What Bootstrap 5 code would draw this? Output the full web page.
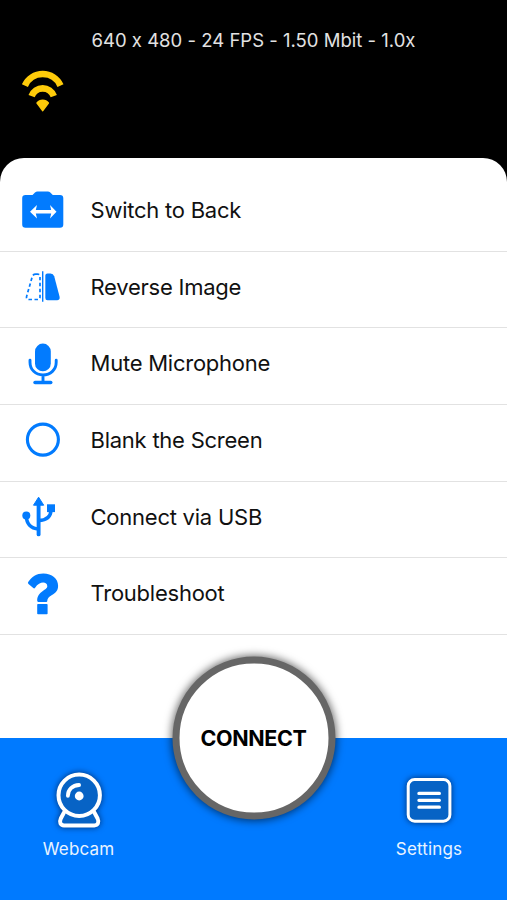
<!DOCTYPE html>
<html lang="en">
<head>
<meta charset="utf-8">
<meta name="viewport" content="width=device-width, initial-scale=1">
<title>Webcam</title>
<link href="https://cdn.jsdelivr.net/npm/bootstrap@5.3.0/dist/css/bootstrap.min.css" rel="stylesheet">
<style>
body { font-family: Inter, "Liberation Sans", sans-serif; color: #111; }
.app-screen { height: 900px; overflow: hidden; }
.status-area { height: 158px; }
.stream-info { padding-top: 27px; font-size: 18.5px; line-height: 26px; letter-spacing: .01px; font-feature-settings: "calt" 0; color: #e2e2e2; }
.signal-icon { margin: 16px 0 0 21px; }
.sheet { border-radius: 24px 24px 0 0; padding-top: 17px; }
.menu-row { height: 76.7px; padding: 0 0 5px 21px; gap: 25.5px; border: 0; border-bottom: 1.5px solid #e2e2e2; font-size: 22px; background: transparent; color: #111; letter-spacing: -.24px; }
.menu-row svg { color: #027bfe; }
.bottom-bar { height: 162px; background: #007aff; padding: 29px 29.5px 0 30px; }
.tab-item { width: 97px; color: #e9f3ff; font-size: 17px; line-height: 24px; letter-spacing: .15px; }
.tab-item svg { filter: drop-shadow(0 0 3px rgba(0,20,60,.75)); }
.connect-btn { width: 163px; height: 163px; border: 7px solid #666; box-shadow: 0 0 9px 1px rgba(0,0,0,.6); font-size: 21.5px; font-weight: 700; letter-spacing: -.4px; color: #000; }
</style>
</head>
<body>
<main class="app-screen d-flex flex-column bg-black">
  <header class="status-area">
    <div class="stream-info text-center"><span>640 x 480 - 24 FPS - 1.50 Mbit - 1.0x</span></div>
    <svg class="signal-icon d-block" width="44" height="44" viewBox="21 69 44 44" fill="none" stroke="#fecb0a" stroke-width="6.6">
      <path d="M24.900 85.600A19.500 19.500 0 0 1 60.500 85.600"/>
      <path d="M31.600 96.200A11.800 11.800 0 0 1 53.800 96.200"/>
      <path d="M42.700 100.300C45 100.300 47 101.300 48.300 103L42.700 110.600L37.100 103C38.400 101.300 40.400 100.300 42.700 100.300Z" fill="#fecb0a" stroke-width="1.600" stroke-linejoin="round"/>
    </svg>
  </header>

  <section class="sheet bg-white flex-grow-1">
    <div class="list-group list-group-flush">
      <button class="menu-row d-flex align-items-center text-start">
        <svg width="44" height="44" viewBox="0 0 44 44"><path fill="currentColor" d="M4.500 7H11.500L14 4.500Q15 3.400 16.500 3.400H26.800Q28.300 3.400 29.300 4.500L31.800 7H39Q42.300 7 42.300 10.300V36.400Q42.300 39.700 39 39.700H4.500Q1.200 39.700 1.200 36.400V10.300Q1.200 7 4.500 7Z"/><path fill="#fff" d="M9 23.700L16 16.900L14.800 22H30.200L29 16.900L35.500 23.700L29 30.500L30.200 25.400H14.800L16 30.500Z"/></svg>
        <span>Switch to Back</span>
      </button>
      <button class="menu-row d-flex align-items-center text-start">
        <svg width="44" height="44" viewBox="0 0 44 44"><path fill="none" stroke="currentColor" stroke-width="1.700" stroke-dasharray="3.400 2.500" d="M14.800 9.200H16.500Q19 9.200 19 11.800V32Q19 34.500 16.500 34.500H8Q5 34.500 5.600 31.500L11.200 11.800Q12 9.200 14.800 9.200Z"/><path stroke="currentColor" stroke-width="1.400" d="M21.700 6.200V36.800"/><path fill="currentColor" d="M26.500 8.500H29.500Q32.300 8.500 33.200 11.300L38.600 31.800Q39.200 35.200 36 35.200H26.500Q24.300 35.200 24.300 33V10.700Q24.300 8.500 26.500 8.500Z"/></svg>
        <span>Reverse Image</span>
      </button>
      <button class="menu-row d-flex align-items-center text-start">
        <svg width="44" height="44" viewBox="0 0 44 44"><rect x="14" y="1.600" width="15.800" height="27.700" rx="7.900" fill="currentColor"/><path fill="none" stroke="currentColor" stroke-width="2.900" stroke-linecap="round" d="M9 18.200V20.200C9 27.500 14.500 33 22 33S35.200 27.500 35.200 20.200V18.200M22 33V40.500"/><path stroke="currentColor" stroke-width="3.400" stroke-linecap="round" d="M14 40.500H29.800"/></svg>
        <span>Mute Microphone</span>
      </button>
      <button class="menu-row d-flex align-items-center text-start">
        <svg width="44" height="44" viewBox="0 0 44 44"><circle cx="21.900" cy="21.600" r="15.500" fill="none" stroke="currentColor" stroke-width="3.100"/></svg>
        <span>Blank the Screen</span>
      </button>
      <button class="menu-row d-flex align-items-center text-start">
        <svg width="44" height="44" viewBox="0 0 44 44"><g fill="none" stroke="currentColor" stroke-width="3.500"><path stroke-width="3.900" stroke-linecap="round" d="M17.600 8V39.400"/><path d="M5.300 20.600C5.300 28.500 9.500 33.600 17.600 34.100M17.600 25.500C25 25.300 29.800 22.500 30 15"/></g><path fill="currentColor" stroke="currentColor" stroke-linejoin="round" d="M17.600 2.200L22.700 10.200H12.500Z"/><circle cx="5.300" cy="20.600" r="4" fill="currentColor"/><rect x="26" y="9.300" width="8" height="7.800" fill="currentColor"/></svg>
        <span>Connect via USB</span>
      </button>
      <button class="menu-row d-flex align-items-center text-start">
        <svg width="44" height="44" viewBox="0 0 44 44" fill="currentColor"><path d="M7.200 10.100C10.700 4.700 15.500 1.500 22.300 1.500C31 1.500 37.100 6.500 37.100 13.800C37.100 23.400 27 22.200 26.300 28.900Q26.200 29.900 25.300 29.900H17.200Q16.200 29.900 16.200 28.800C16.200 18.800 26.300 18.500 26.300 14.200C26.300 9.600 18.700 8.700 14.100 15.800Q13.300 16.900 12.300 16.100L7.500 12.100Q6.500 11.200 7.200 10.100Z"/><rect x="16.200" y="31.900" width="10.400" height="10.300" rx=".8"/></svg>
        <span>Troubleshoot</span>
      </button>
    </div>
  </section>

  <nav class="bottom-bar position-relative d-flex justify-content-between">
    <div class="tab-item d-flex flex-column align-items-center">
      <svg width="60" height="70" viewBox="48.500 767 60 70" fill="none" stroke="#fff" stroke-width="4">
        <path fill="#0763c5" stroke-linejoin="round" stroke-linecap="round" d="M63.500 812.500L60.300 818.500C58.500 822.500 60 825.400 63.500 825.400H93.800C97.300 825.400 98.900 822.500 97.100 818.500L93.900 812.500"/>
        <circle cx="78.700" cy="795.300" r="20.700" fill="#0763c5"/>
        <circle cx="78.700" cy="796" r="4.400" fill="#fff" stroke="none"/>
        <path stroke-linecap="round" stroke-width="3.800" d="M67.400 795.800C67.400 789.600 72 785.300 78.600 785"/>
      </svg>
      <span>Webcam</span>
    </div>
    <button class="connect-btn position-absolute top-0 start-50 translate-middle rounded-circle bg-white p-0">CONNECT</button>
    <div class="tab-item d-flex flex-column align-items-center">
      <svg width="60" height="70" viewBox="399.300 767 60 70" fill="none" stroke="#fff">
        <rect x="408.500" y="779.500" width="41.700" height="41.700" rx="6.500" fill="#0763c5" stroke-width="3"/>
        <path stroke-width="3.200" stroke-linecap="round" d="M419.200 793.400H439.700M419.200 800.300H439.700M419.200 807.200H439.700"/>
      </svg>
      <span>Settings</span>
    </div>
  </nav>
</main>
<script src="https://cdn.jsdelivr.net/npm/bootstrap@5.3.0/dist/js/bootstrap.bundle.min.js"></script>
</body>
</html>
